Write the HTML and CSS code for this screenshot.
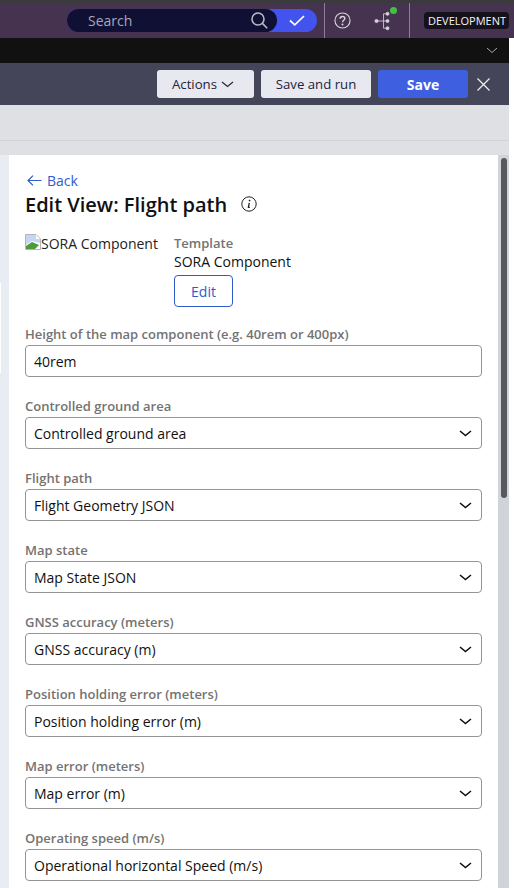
FILE: index.html
```html
<!DOCTYPE html>
<html>

<head>
    <title>Edit View: Flight path</title>
    <link rel="stylesheet" href="styles.css">
</head>

<body>
    <div class="top-strip"></div>
    <header class="app-bar">
        <div class="search">
            <div class="search-field">
                <span class="search-text">Search</span>
                <svg class="search-icon" width="17" height="17" viewBox="0 0 17 17" fill="none" stroke="#b9b6c4" stroke-width="1.6">
                    <circle cx="7" cy="7" r="6"></circle>
                    <path d="M11.4 11.4 L16.2 16.2"></path>
                </svg>
            </div>
            <span class="search-go">
                <svg width="16" height="11" viewBox="0 0 16 11" fill="none" stroke="#fff" stroke-width="1.7">
                    <path d="M1 5.5 L5.8 9.8 L15 1"></path>
                </svg>
            </span>
        </div>
        <div class="bar-icon bar-help">
            <svg width="17" height="17" viewBox="0 0 18 18" fill="none" stroke="#d9d4de" stroke-width="1.2">
                <circle cx="9" cy="9" r="8"></circle>
                <path d="M6.5 7.2 C6.5 5.5 7.7 4.7 9 4.7 C10.4 4.7 11.5 5.6 11.5 7 C11.5 8.7 9 8.8 9 10.8" stroke-width="1.5"></path>
                <circle cx="9" cy="13.3" r="0.5"></circle>
            </svg>
        </div>
        <div class="bar-icon bar-tree">
            <svg width="20" height="20" viewBox="0 0 20 20" fill="#d9d4de" stroke="#d9d4de" stroke-width="0.8">
                <circle cx="2.5" cy="10" r="1.6"></circle>
                <circle cx="13.5" cy="2.8" r="1.5"></circle>
                <circle cx="13.5" cy="10" r="1.5"></circle>
                <circle cx="13.5" cy="17.2" r="1.5"></circle>
                <path d="M2.5 10 H13.5 M9.5 10 V2.8 H13.5 M9.5 10 V17.2 H13.5" fill="none"></path>
            </svg>
            <span class="status-dot"></span>
        </div>
        <div class="env-wrap">
            <span class="env-tag">DEVELOPMENT</span>
        </div>
    </header>

    <div class="work-area">
        <div class="tab-strip">
            <svg width="12" height="7" viewBox="0 0 12 7" fill="none" stroke="#aaa" stroke-width="1">
                <path d="M1 1 L6 5.5 L11 1"></path>
            </svg>
        </div>
        <div class="toolbar">
            <button class="btn btn-light btn-actions">Actions
                <svg width="13" height="7" viewBox="0 0 13 7" fill="none" stroke="#23233a" stroke-width="1.2">
                    <path d="M1 1 L6.5 5.5 L12 1"></path>
                </svg>
            </button>
            <button class="btn btn-light btn-run">Save and run</button>
            <button class="btn btn-save">Save</button>
            <svg class="close-icon" width="13" height="13" viewBox="0 0 13 13" stroke="#f2f2f5" stroke-width="1.2">
                <path d="M0.5 0.5 L12.5 12.5 M12.5 0.5 L0.5 12.5"></path>
            </svg>
        </div>
        <div class="sub-strip"></div>

        <div class="pane-row">
            <aside class="left-gutter">
                <div class="gutter-tab"></div>
            </aside>
            <main class="panel">
                <a class="back-link">
                    <svg width="15" height="11" viewBox="0 0 15 11" fill="none" stroke="#2f5cc9" stroke-width="1.2">
                        <path d="M14.5 5.5 H1 M6 0.6 L1 5.5 L6 10.4"></path>
                    </svg>
                    Back
                </a>
                <div class="title-row">
                    <h1>Edit View: Flight path</h1>
                    <svg width="16" height="16" viewBox="0 0 16 16" fill="none" stroke="#222" stroke-width="1">
                        <circle cx="8" cy="8" r="7.2"></circle>
                        <path d="M8.3 6.8 L7.4 11.4 H8.8" stroke-width="1.3"></path>
                        <circle cx="8.6" cy="4.6" r="0.5" fill="#222"></circle>
                    </svg>
                </div>
                <div class="template-row">
                    <div class="broken-img">
                        <svg width="16" height="16" viewBox="0 0 16 16">
                            <path d="M0.5 0.5 H11 L15.5 5 V15.5 H0.5 Z" fill="#fff" stroke="#b5b5b5"></path>
                            <path d="M1 1 H10.8 L11 5 L15 5 V9 L7 7 L1 11 Z" fill="#c3d6f2"></path>
                            <path d="M1 15 V12 L7 8 L14 11 L10 15 Z" fill="#4f9b3a"></path>
                        </svg>
                        <span>SORA Component</span>
                    </div>
                    <div class="template-info">
                        <div class="field-label">Template</div>
                        <div class="template-name">SORA Component</div>
                        <button class="btn-edit">Edit</button>
                    </div>
                </div>

                <div class="field">
                    <div class="field-label">Height of the map component (e.g. 40rem or 400px)</div>
                    <div class="control">40rem</div>
                </div>
                <div class="field">
                    <div class="field-label">Controlled ground area</div>
                    <div class="control control-select">Controlled ground area
                        <svg width="13" height="7" viewBox="0 0 13 7" fill="none" stroke="#111" stroke-width="1.6"><path d="M1 1 L6.5 5.5 L12 1"></path></svg>
                    </div>
                </div>
                <div class="field">
                    <div class="field-label">Flight path</div>
                    <div class="control control-select">Flight Geometry JSON
                        <svg width="13" height="7" viewBox="0 0 13 7" fill="none" stroke="#111" stroke-width="1.6"><path d="M1 1 L6.5 5.5 L12 1"></path></svg>
                    </div>
                </div>
                <div class="field">
                    <div class="field-label">Map state</div>
                    <div class="control control-select">Map State JSON
                        <svg width="13" height="7" viewBox="0 0 13 7" fill="none" stroke="#111" stroke-width="1.6"><path d="M1 1 L6.5 5.5 L12 1"></path></svg>
                    </div>
                </div>
                <div class="field">
                    <div class="field-label">GNSS accuracy (meters)</div>
                    <div class="control control-select">GNSS accuracy (m)
                        <svg width="13" height="7" viewBox="0 0 13 7" fill="none" stroke="#111" stroke-width="1.6"><path d="M1 1 L6.5 5.5 L12 1"></path></svg>
                    </div>
                </div>
                <div class="field">
                    <div class="field-label">Position holding error (meters)</div>
                    <div class="control control-select">Position holding error (m)
                        <svg width="13" height="7" viewBox="0 0 13 7" fill="none" stroke="#111" stroke-width="1.6"><path d="M1 1 L6.5 5.5 L12 1"></path></svg>
                    </div>
                </div>
                <div class="field">
                    <div class="field-label">Map error (meters)</div>
                    <div class="control control-select">Map error (m)
                        <svg width="13" height="7" viewBox="0 0 13 7" fill="none" stroke="#111" stroke-width="1.6"><path d="M1 1 L6.5 5.5 L12 1"></path></svg>
                    </div>
                </div>
                <div class="field">
                    <div class="field-label">Operating speed (m/s)</div>
                    <div class="control control-select">Operational horizontal Speed (m/s)
                        <svg width="13" height="7" viewBox="0 0 13 7" fill="none" stroke="#111" stroke-width="1.6"><path d="M1 1 L6.5 5.5 L12 1"></path></svg>
                    </div>
                </div>
            </main>
            <div class="scroll-track">
                <div class="scroll-thumb"></div>
            </div>
        </div>
    </div>
</body>

</html>
```

FILE: styles.css
```css
* {
    box-sizing: border-box;
}

html,
body {
    height: 888px;
    overflow: hidden;
}

body {
    margin: 0;
    padding: 0;
    font-family: "Open Sans", sans-serif;
    background-color: #fff;
}

.top-strip {
    height: 3px;
    background-color: #3b3b3d;
}

.app-bar {
    height: 35px;
    display: flex;
    align-items: stretch;
    padding-left: 67px;
    background-color: #46334f;
}

.search {
    width: 250px;
    height: 23px;
    margin-top: 6px;
    display: flex;
    border-radius: 12px;
    background-color: #4353ee;
}

.search-field {
    flex: 1;
    display: flex;
    align-items: center;
    border-radius: 12px;
    background-color: #0f1034;
}

.search-text {
    margin-left: 21px;
    font-size: 14px;
    color: #a9a8b8;
}

.search-icon {
    margin-left: auto;
    margin-right: 9px;
}

.search-go {
    width: 40px;
    display: flex;
    align-items: center;
    justify-content: center;
}

.bar-icon {
    position: relative;
    display: flex;
    align-items: center;
    justify-content: center;
}

.bar-help {
    width: 35px;
    margin-left: 7px;
    border-left: 1px solid #8d8096;
}

.bar-tree {
    width: 50px;
}

.status-dot {
    position: absolute;
    top: 4px;
    right: 12px;
    width: 7px;
    height: 7px;
    border-radius: 50%;
    background-color: #3fc23f;
}

.env-wrap {
    flex: 1;
    display: flex;
    align-items: center;
    padding-left: 14px;
    border-left: 1px solid #8d8096;
}

.env-tag {
    height: 17px;
    padding: 0 3px 0 4px;
    border-radius: 4px;
    font-size: 11px;
    line-height: 17px;
    color: #f4f4f4;
    background-color: #15121c;
}

.work-area {
    margin-right: 5px;
}

.tab-strip {
    height: 25px;
    display: flex;
    align-items: center;
    justify-content: flex-end;
    padding-right: 11px;
    background-color: #111;
}

.toolbar {
    height: 42px;
    display: flex;
    align-items: center;
    padding-left: 157px;
    background-color: #444558;
}

.btn {
    height: 28px;
    border: none;
    border-radius: 3px;
    font-family: inherit;
    font-size: 13.2px;
    padding: 0;
}

.btn-light {
    color: #23233a;
    background-color: #e8e9f0;
}

.btn-actions {
    width: 97px;
    display: flex;
    align-items: center;
    gap: 4px;
    padding-left: 15px;
}

.btn-run {
    width: 110px;
    margin-left: 7px;
}

.btn-save {
    width: 90px;
    margin-left: 7px;
    font-size: 14px;
    font-weight: 700;
    color: #fff;
    background-color: #3d5fe0;
}

.close-icon {
    margin-left: 9px;
}

.sub-strip {
    height: 50px;
    background: linear-gradient(#dfe0e4 35px, #d3d4d8 35px, #d3d4d8 36px, #dfe0e4 36px);
}

.pane-row {
    display: flex;
    height: 733px;
}

.left-gutter {
    width: 9px;
    background-color: #e8ecf3;
}

.gutter-tab {
    width: 1px;
    height: 90px;
    margin-top: 128px;
    background-color: #fff;
}

.panel {
    width: 489px;
    padding: 15px 16px 0;
    background-color: #fff;
}

.scroll-track {
    width: 11px;
    padding: 3px 2px 0 3px;
    background-color: #d0d3d9;
}

.scroll-thumb {
    height: 340px;
    border-radius: 3px;
    background-color: #58595c;
}

.back-link {
    display: flex;
    align-items: center;
    gap: 5px;
    height: 20px;
    padding-left: 2px;
    font-size: 14px;
    color: #2f5cc9;
}

.title-row {
    display: flex;
    align-items: center;
    gap: 14px;
    height: 28px;
}

h1 {
    margin: 0;
    font-size: 20px;
    font-weight: 600;
    color: #111;
}

.template-row {
    display: flex;
    margin-top: 16px;
}

.broken-img {
    width: 149px;
    display: flex;
    align-items: flex-start;
    font-size: 14px;
    line-height: 20px;
    color: #222;
}

.field-label {
    font-size: 13px;
    font-weight: 600;
    line-height: 18px;
    color: #737373;
}

.template-name {
    font-size: 14px;
    line-height: 19px;
    color: #111;
}

.btn-edit {
    width: 59px;
    height: 32px;
    margin-top: 4px;
    border: 1px solid #2f5cc9;
    border-radius: 4px;
    font-family: inherit;
    font-size: 14px;
    color: #2f5cc9;
    background-color: #fff;
}

.field {
    margin-top: 20px;
}

.template-row + .field {
    margin-top: 18px;
}

.field-label + .control {
    margin-top: 2px;
}

.control {
    width: 457px;
    height: 32px;
    display: flex;
    align-items: center;
    justify-content: space-between;
    padding: 0 9px 0 8px;
    border: 1px solid #949494;
    border-radius: 4px;
    font-size: 14px;
    color: #111;
}
```
